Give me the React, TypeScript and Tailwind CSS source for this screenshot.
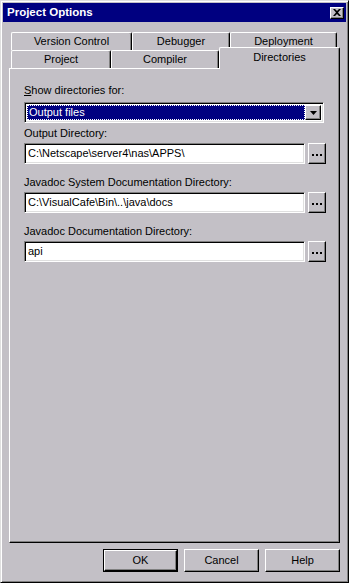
import React from "react";

const font = { fontFamily: '"Liberation Sans", Arial, sans-serif' };

function Tab({ label, w, selected }: { label: string; w: number; selected?: boolean }) {
  return (
    <div
      style={{ width: w }}
      className={
        "relative flex items-center justify-center rounded-tl-[2px] rounded-tr-[2px] border-l border-t border-r border-l-white border-t-white border-r-black shadow-[inset_-1px_0_0_#808080] bg-[#c3c0c6] text-[11px] text-black " +
        (selected ? "z-10 h-[22px] -mt-[3px] mb-[-1px] self-start pb-[3px]" : "h-[18px]")
      }
    >
      {label}
    </div>
  );
}

function Sunken({ children, className }: { children?: React.ReactNode; className?: string }) {
  return (
    <div
      className={
        "border border-t-[#808080] border-l-[#808080] border-b-white border-r-white shadow-[inset_1px_1px_0_#000,inset_-1px_-1px_0_#dfdfdf] " +
        (className || "")
      }
    >
      {children}
    </div>
  );
}

function Raised({ children, className }: { children?: React.ReactNode; className?: string }) {
  return (
    <div
      className={
        "flex items-center justify-center border border-t-white border-l-white border-b-black border-r-black shadow-[inset_-1px_-1px_0_#808080] bg-[#c3c0c6] " +
        (className || "")
      }
    >
      {children}
    </div>
  );
}

function Dots() {
  return (
    <div className="flex gap-[2px] pt-[3px]">
      <div className="w-[2px] h-[2px] bg-black" />
      <div className="w-[2px] h-[2px] bg-black" />
      <div className="w-[2px] h-[2px] bg-black" />
    </div>
  );
}

function Field({ label, value }: { label: string; value: string }) {
  return (
    <div className="flex flex-col">
      <div className="h-[13px] leading-[13px] text-[11px] text-black">{label}</div>
      <div className="flex mt-[3px] gap-[3px]">
        <Sunken className="w-[281px] h-[21px] bg-white flex items-center pl-[3px] text-[11px] text-black">
          {value}
        </Sunken>
        <Raised className="w-[18px] h-[21px]">
          <Dots />
        </Raised>
      </div>
    </div>
  );
}

function Button({ label, def }: { label: string; def?: boolean }) {
  if (def) {
    return (
      <div className="w-[75px] h-[23px] border border-black">
        <Raised className="w-full h-full text-[11px] text-black">{label}</Raised>
      </div>
    );
  }
  return <Raised className="w-[75px] h-[23px] text-[11px] text-black">{label}</Raised>;
}

export default function App() {
  return (
    <div
      style={font}
      className="w-[349px] h-[583px] bg-[#c3c0c6] border border-t-[#dfdfdf] border-l-[#dfdfdf] border-b-black border-r-black shadow-[inset_1px_1px_0_#fff,inset_-1px_-1px_0_#808080] p-[2px] flex flex-col overflow-hidden"
    >
      {/* Title bar */}
      <div className="h-[19px] bg-[#000080] flex items-center justify-between pl-[4px] pr-[2px]">
        <span className="text-white font-bold text-[11.5px] leading-none">Project Options</span>
        <Raised className="w-[14px] h-[12px]">
          <svg width="8" height="7" viewBox="0 0 8 7">
            <path d="M0 0h2l2 2 2-2h2L5 3.5 8 7H6L4 5 2 7H0l3-3.5z" fill="#000" />
          </svg>
        </Raised>
      </div>

      {/* Tabs */}
      <div className="ml-[6px] mt-[10px] flex flex-col w-[331px]">
        <div className="flex pl-[2px] h-[18px]">
          <Tab label="Version Control" w={121} />
          <Tab label="Debugger" w={98} />
          <Tab label="Deployment" w={107} />
        </div>
        <div className="flex pl-[2px] h-[18px]">
          <Tab label="Project" w={100} />
          <Tab label="Compiler" w={108} />
          <Tab label="Directories" w={121} selected />
        </div>

        {/* Panel */}
        <div className="h-[475px] border border-t-white border-l-white border-r-black border-b-black shadow-[inset_-1px_-1px_0_#808080] pl-[14px] pt-[15px] flex flex-col">
          <div className="h-[13px] leading-[13px] text-[11px] text-black">
            <span className="underline">S</span>how directories for:
          </div>
          <Sunken className="mt-[5px] w-[300px] h-[21px] bg-white flex items-center p-[2px]">
            <div className="flex-1 h-full bg-[#000080] outline outline-1 outline-dotted outline-white -outline-offset-1 flex items-center pl-[2px] text-[11px] text-white">
              Output files
            </div>
            <Raised className="w-[16px] h-full">
              <svg width="7" height="4" viewBox="0 0 7 4">
                <path d="M0 0h7L3.5 4z" fill="#000" />
              </svg>
            </Raised>
          </Sunken>
          <div className="mt-[4px] flex flex-col gap-[12px]">
            <Field label="Output Directory:" value="C:\Netscape\server4\nas\APPS\" />
            <Field label="Javadoc System Documentation Directory:" value="C:\VisualCafe\Bin\..\java\docs" />
            <Field label="Javadoc Documentation Directory:" value="api" />
          </div>
        </div>
      </div>

      {/* Buttons */}
      <div className="mt-[6px] flex justify-end gap-[6px] pr-[6px]">
        <Button label="OK" def />
        <Button label="Cancel" />
        <Button label="Help" />
      </div>
    </div>
  );
}
